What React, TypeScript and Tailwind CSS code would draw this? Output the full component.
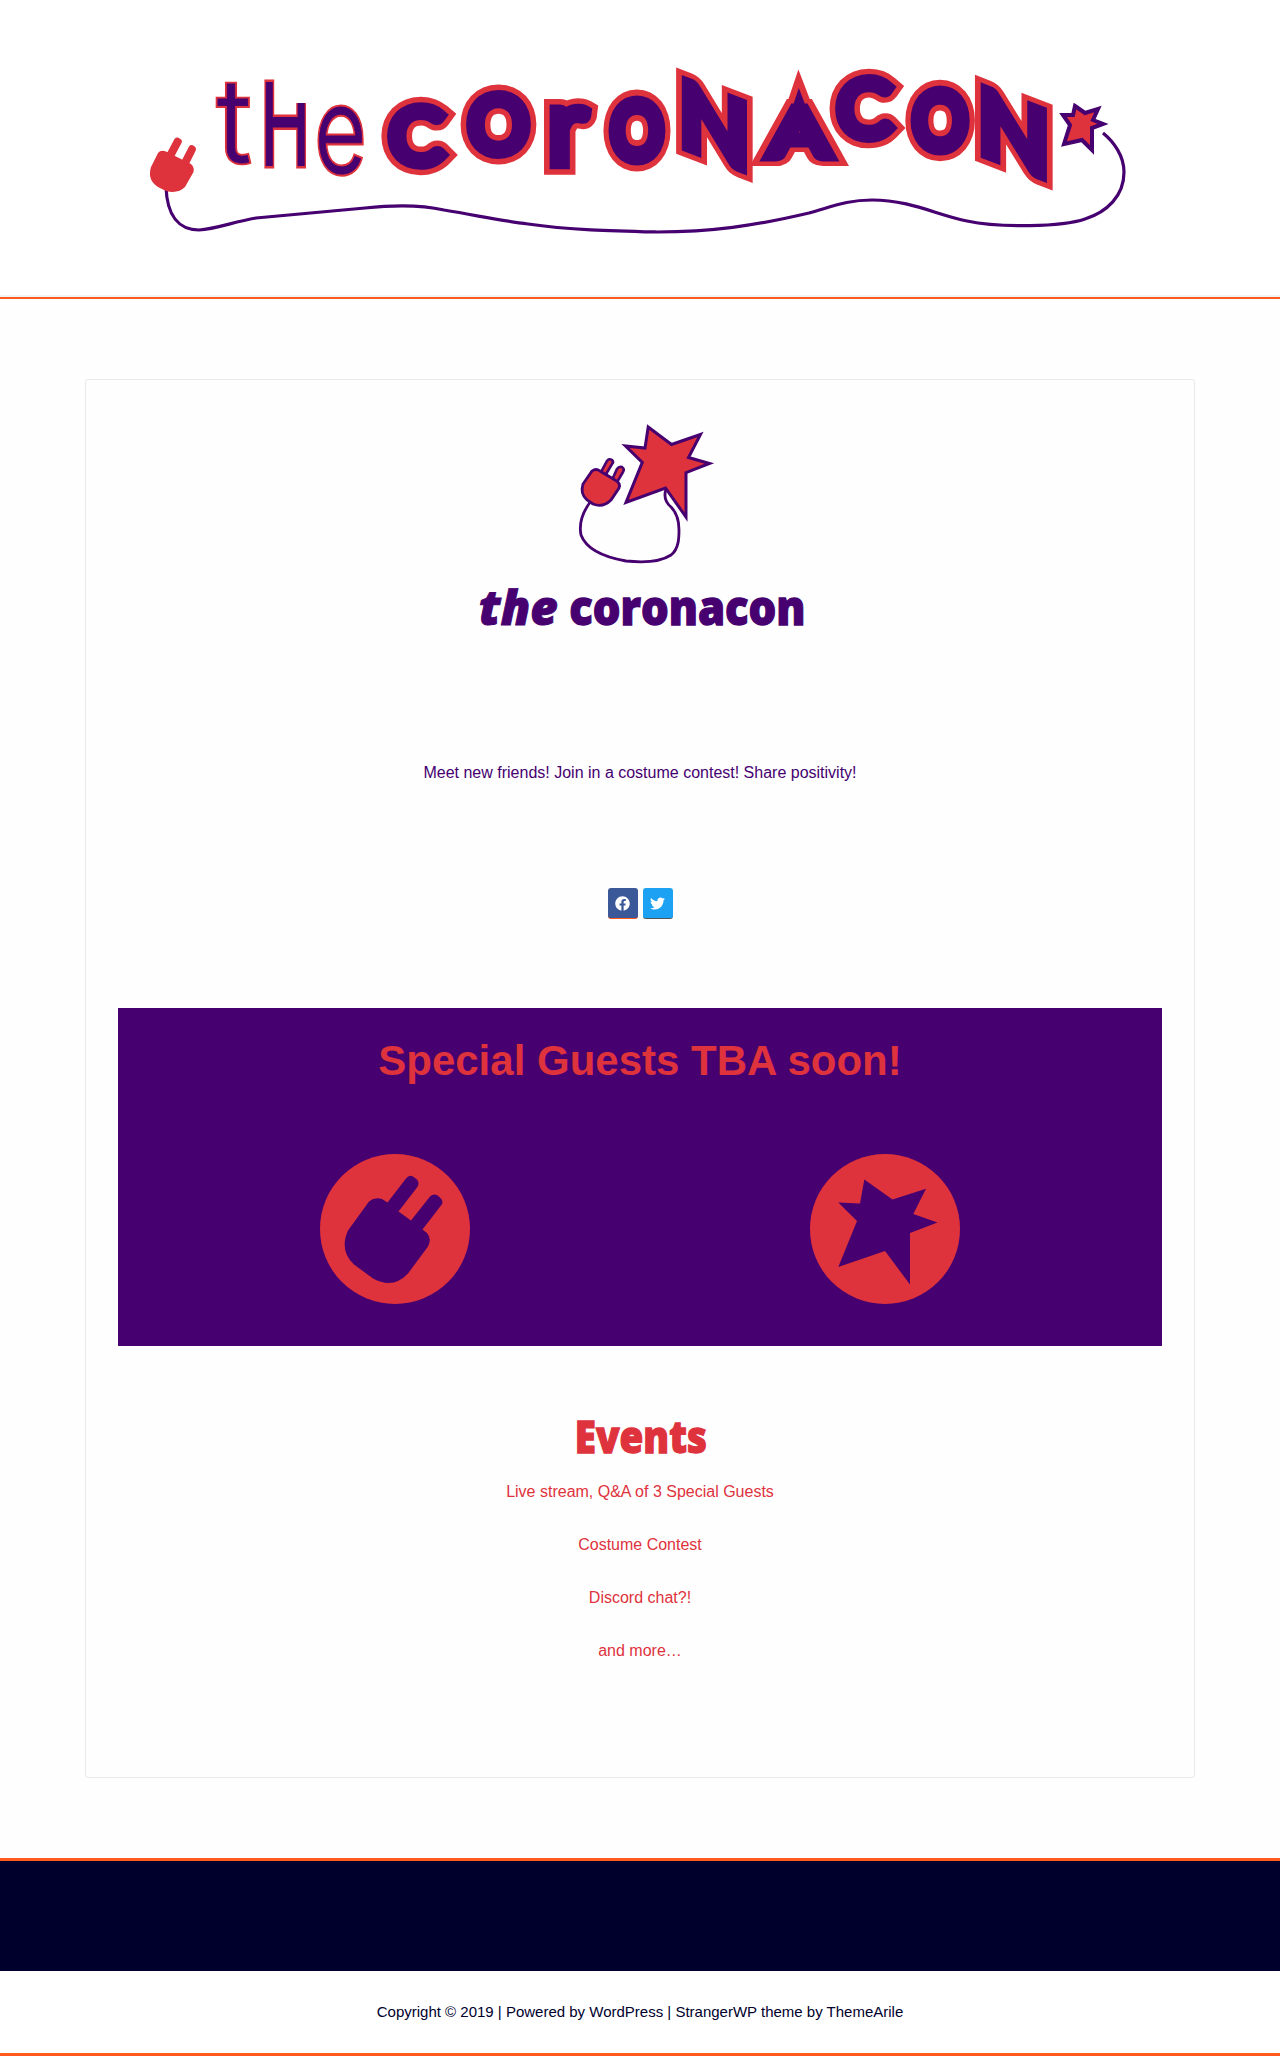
import { useMemo } from "react";
import { FaFacebook, FaTwitter } from "react-icons/fa";

const PURPLE = "#460070";
const RED = "#de323c";

type FitProps = {
  text: string;
  font: string;
  weight?: number;
  italic?: boolean;
  /** Ink box of the unstroked letters: left, top, right, bottom. */
  box: [number, number, number, number];
  fill: string;
  /** Stroke layers, painted from the back to the front. */
  layers?: { color: string; width: number }[];
  /** How far sharp corners of the stroke may reach. */
  miter?: number;
  /** Extra SVG transform applied around the fitted text. */
  transform?: string;
  clipPath?: string;
};

/** Text whose ink is stretched to fill a box. */
function FitText({ text, font, weight = 400, italic = false, box, fill, layers = [], miter = 4, transform, clipPath }: FitProps) {
  const [l, t, r, b] = box;
  const m = useMemo(() => {
    const ctx = document.createElement("canvas").getContext("2d")!;
    ctx.font = `${italic ? "italic " : ""}${weight} 100px "${font}"`;
    const k = ctx.measureText(text);
    return {
      left: -k.actualBoundingBoxLeft,
      right: k.actualBoundingBoxRight,
      top: -k.actualBoundingBoxAscent,
      bottom: k.actualBoundingBoxDescent,
    };
  }, [text, font, weight, italic]);
  const sx = (r - l) / (m.right - m.left);
  const sy = (b - t) / (m.bottom - m.top);
  const s = Math.sqrt(sx * sy);
  const common = {
    fontFamily: `"${font}", sans-serif`,
    fontSize: 100,
    fontWeight: weight,
    fontStyle: italic ? "italic" : "normal",
    strokeLinejoin: "miter" as const,
    strokeMiterlimit: miter,
  };
  const place = `translate(${l - m.left * sx} ${t - m.top * sy}) scale(${sx} ${sy})`;
  return (
    <g transform={transform} clipPath={clipPath}>
      <g transform={place}>
        {layers.slice(0, -1).map((layer, i) => (
          <text key={i} {...common} aria-hidden="true" fill={layer.color} stroke={layer.color} strokeWidth={layer.width / s}>
            {text}
          </text>
        ))}
        <text
          {...common}
          fill={fill}
          stroke={layers.length ? layers[layers.length - 1].color : "none"}
          strokeWidth={layers.length ? layers[layers.length - 1].width / s : 0}
        >
          {text}
        </text>
      </g>
    </g>
  );
}

const thin = [
  { color: RED, width: 4.5 },
  { color: PURPLE, width: 0.8 },
];
const thick = [
  { color: RED, width: 26 },
  { color: PURPLE, width: 15 },
];

function HeaderLogo() {
  return (
    <svg viewBox="0 0 1280 295" className="block h-[295px] w-full" role="img" aria-label="the CoronaCon">
      <defs>
        <clipPath id="short-stem">
          <path d="M255 70H285V103H320V180H255Z" />
        </clipPath>
      </defs>
      <path
        d="M166 187C167 216 179 230 199 230C216 229 233 222 256 218L365 208C392 205 418 204 444 210C480 216 502 221 528 224C569 230 615 231 657 232C711 232 754 226 809 213C834 206 847 200 872 200C910 200 937 215 967 221C1000 228 1062 227 1085 219C1107 212 1124 196 1124 172C1124 156 1114 142 1103 133"
        fill="none"
        stroke={PURPLE}
        strokeWidth="3.2"
      />
      <g fill={RED}>
        <path d="M158 153Q161 149 167 152L188 162.500Q195 165 193.500 172L185 187Q178 194 166 191L158 187Q147 180 151 167Z" />
        <path d="M167 153L174.500 139Q177 136.500 179.500 138.500Q183 140 181.500 143L173 159ZM181 162L189 146.500Q191 144 194 146Q197 148 195.500 151L188 166Z" />
      </g>
      <FitText text="t" font="Inter" weight={300} box={[217, 83, 249, 164]} fill={PURPLE} layers={thin} />
      <FitText text="H" font="Liberation Sans" box={[266, 83, 305, 166]} fill={PURPLE} layers={thin} clipPath="url(#short-stem)" />
      <FitText text="e" font="Inter" weight={300} box={[319, 107, 362, 174]} fill={PURPLE} layers={thin} />
      <FitText text="C" font="Lato" weight={300} box={[394, 109, 440, 163]} fill={PURPLE} layers={thick} />
      <FitText text="O" font="Lato" weight={300} box={[473, 97, 524, 152]} fill={PURPLE} layers={thick} />
      <FitText text="r" font="Lato" weight={300} box={[557, 111, 585, 162]} fill={PURPLE} layers={thick} />
      <FitText text="O" font="Lato" weight={300} box={[615, 103, 659, 158]} fill={PURPLE} layers={thick} />
      <FitText text="N" font="Lato" weight={300} box={[689, 94, 740, 156]} fill={PURPLE} layers={thick} miter={2.2} transform="skewY(21) translate(0 -274.500)" />
      <FitText text="A" font="Lato" weight={300} box={[772, 110, 827, 155]} fill={PURPLE} layers={thick} />
      <FitText text="C" font="Lato" weight={300} box={[842, 81, 888, 136]} fill={PURPLE} layers={thick} />
      <FitText text="O" font="Lato" weight={300} box={[917, 93, 963, 148]} fill={PURPLE} layers={thick} />
      <FitText text="N" font="Lato" weight={300} box={[988, 101, 1040, 163]} fill={PURPLE} layers={thick} miter={2.2} transform="skewY(21) translate(0 -389)" />
      <path d="M1075 106L1085 113L1098 109L1093 120L1103 124L1092 128V150L1082 140L1064 144L1070 125L1063 115L1073 115Z" fill={RED} stroke={PURPLE} strokeWidth="4" />
    </svg>
  );
}

function BrandMark() {
  return (
    <svg viewBox="460 410 360 240" className="mx-auto block h-[240px] w-[360px] overflow-visible" role="img" aria-label="the coronacon">
      <g stroke={PURPLE} strokeWidth="2.8" fill={RED}>
        <path d="M591 501C581 514 579 525 581 535C587 551 609 558 626 561C646 563 662 561 671 555C679 549 679 537 679 530C679 521 677 513 671 507C664 501 664 495 666 489" fill="none" />
        <path d="M648.2 427L671.5 444.5L700.5 434.5L688.5 457.5L709.5 463.5L686 472.7V517L665.5 488L626 502.5L642.3 462.3L625.5 446L645 448Z" strokeWidth="3" />
        <path d="M601 472L607 461Q609 458 612 460Q614 462 612 464L605 476ZM612 480L617 469Q619 466 622 467Q625 469 623 472L616 484Z" strokeWidth="2.6" />
        <path d="M592 471Q596 468 600 471L615 480Q621 483 619 488L611 500Q603 508 593 504L587 500Q580 494 583 484Z" />
      </g>
      <FitText text="the" font="Open Sans" weight={800} italic box={[480.5, 589, 557, 625.5]} fill={PURPLE} layers={[{ color: PURPLE, width: 1 }]} />
      <FitText text="coronacon" font="Open Sans" weight={800} box={[571, 597.5, 803, 625.5]} fill={PURPLE} layers={[{ color: PURPLE, width: 1.2 }]} />
    </svg>
  );
}

function PlugBadge() {
  return (
    <svg viewBox="320 1153.5 150 150" className="h-[150px] w-[150px]" aria-hidden="true">
      <circle cx="395" cy="1228.5" r="75" fill={RED} />
      <path
        d="M369 1201Q375 1196 382 1198.500L387.500 1202L406 1178Q409 1174 413 1176L417 1179Q420 1183 417 1187L398.500 1211L411 1220L430 1196Q433 1193 437 1194.500L441 1198Q444 1202 441 1205L422.500 1229L427 1232.500Q432 1238 428 1246L408 1273Q393 1289 373 1278L354 1264Q339 1250 348 1230Z"
        fill={PURPLE}
      />
    </svg>
  );
}

function StarBadge() {
  return (
    <svg viewBox="810 1153.5 150 150" className="h-[150px] w-[150px]" aria-hidden="true">
      <circle cx="885" cy="1228.5" r="75" fill={RED} />
      <path d="M864.300 1179L892.500 1199L926 1188.300L913.300 1213.500L937.500 1222L910 1232.500V1284L885 1250.500L838.300 1266.500L857 1220.500L838.300 1202L860 1203Z" fill={PURPLE} />
    </svg>
  );
}

const events = ["Live stream, Q&A of 3 Special Guests", "Costume Contest", "Discord chat?!", "and more…"];

export default function App() {
  return (
    <div className="flex min-h-[2056px] flex-col bg-white font-['Liberation_Sans',Arial,sans-serif] text-base">
      <header className="border-b-2 border-[#ff5b1f]">
        <HeaderLogo />
        <div className="h-0.5 bg-[#f1f3f5]" />
      </header>

      <main className="bg-[#fefefe] px-[85px] py-20">
        <article className="flex h-[1399px] flex-col rounded-[3px] border border-[#e9e9e9] px-8 pt-[30px]">
          <BrandMark />
          <p className="mt-[111px] text-center leading-6 text-[#460070]">
            Meet new friends! Join in a costume contest! Share positivity!
          </p>
          <div className="mt-[103px] flex justify-center gap-[5px] pl-px">
            <a
              href="#"
              aria-label="Facebook"
              className="flex h-[31px] w-[30px] items-center justify-center rounded-[3px] border-b border-[#ff5b1f] bg-[#3b5998] pr-px text-[15px] text-white"
            >
              <FaFacebook />
            </a>
            <a
              href="#"
              aria-label="Twitter"
              className="flex h-[31px] w-[30px] items-center justify-center rounded-[3px] border-b border-[#555555] bg-[#1da1f2] pr-[2px] text-[15px] text-white"
            >
              <FaTwitter />
            </a>
          </div>
          <section className="mt-[89px] h-[338px] shrink-0 bg-[#460070] pt-7">
            <h2 className="text-center text-[42px] leading-[50px] font-bold text-[#de323c]">Special Guests TBA soon!</h2>
            <div className="mt-[68px] ml-[202px] flex gap-[340px]">
              <PlugBadge />
              <StarBadge />
            </div>
          </section>
          <section className="mt-[69px] text-center text-[#de323c]">
            <svg viewBox="565 1415 150 46" className="mx-auto block h-[46px] w-[150px] overflow-visible" role="img" aria-label="Events">
              <FitText text="Events" font="Open Sans" weight={800} box={[577.5, 1421.5, 705.5, 1453]} fill={RED} layers={[{ color: RED, width: 1.2 }]} />
            </svg>
            <ul className="mt-[19px] flex flex-col gap-[29px] leading-6">
              {events.map((item) => (
                <li key={item}>{item}</li>
              ))}
            </ul>
          </section>
        </article>
      </main>

      <footer>
        <div className="h-[113px] border-t-[3px] border-[#ff5b1f] bg-[#00002d]" />
        <p className="flex h-[85px] items-center justify-center border-b-[3px] border-[#ff5b1f] text-[15px] text-[#00002d]">
          Copyright © 2019 | Powered by WordPress | StrangerWP theme by ThemeArile
        </p>
      </footer>
    </div>
  );
}
